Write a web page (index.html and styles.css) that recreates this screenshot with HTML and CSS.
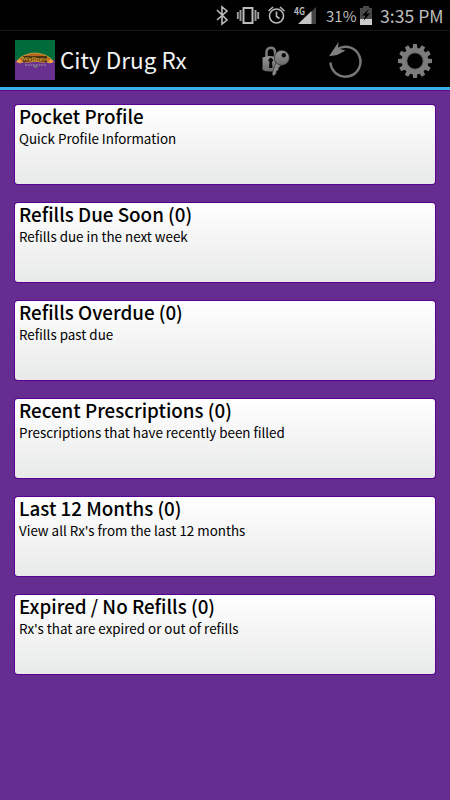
FILE: index.html
```
<!DOCTYPE html>
<html lang="en">
<head>
<meta charset="UTF-8">
<meta name="viewport" content="width=device-width, initial-scale=1.0">
<title>City Drug Rx</title>
<link rel="stylesheet" href="styles.css">
</head>
<body>
  <div class="status-bar">
    <svg class="status-icons" width="110" height="31" viewBox="0 0 110 31">
      <path d="M2 10L12 20L7 24V7L12 11L2 20" fill="none" stroke="#bbb" stroke-width="1.6"/>
      <rect x="28.5" y="8" width="9" height="15" fill="none" stroke="#bbb" stroke-width="2"/>
      <path d="M25.500 10V21M40.500 10V21M22.800 12V19M43.200 12V19" stroke="#999" stroke-width="2"/>
      <circle cx="61.5" cy="16" r="7" fill="none" stroke="#bbb" stroke-width="1.6"/>
      <path d="M61.5 11.5V16.5L64.5 18.5M53.5 11L58 7M69.500 11L65 7" fill="none" stroke="#bbb" stroke-width="1.6"/>
      <text x="79" y="15" class="network" textLength="11" lengthAdjust="spacingAndGlyphs">4G</text>
      <path d="M101 7V24H95V13Z" fill="#444"/>
      <path d="M96.500 11V24H83Z" fill="#c4c4c4"/>
    </svg>
    <span class="battery-level">31%</span>
    <svg class="battery" width="12" height="19" viewBox="0 0 12 19">
      <path d="M3 0H9V2H12V19H0V2H3Z" fill="#484848"/>
      <path d="M0 13H12V19H0Z" fill="#ccc"/>
      <path d="M9 3L2 9.500H5.500L3.500 15L10 7.500H6.500Z" fill="#000"/>
    </svg>
    <span class="clock">3:35 PM</span>
  </div>

  <div class="action-bar">
    <svg class="logo" width="40" height="40" viewBox="0 0 40 40">
      <rect width="40" height="20" fill="#006c3b"/>
      <rect y="20" width="40" height="20" fill="#68318f"/>
      <path d="M2 21Q7 14 20 13Q33 14 38 21L35 23Q20 16 5 23Z" fill="#b5651f" stroke="#e0a63c" stroke-width=".8"/>
      <path d="M1 22L5 19L7 22L4 23ZM39 22L35 19L33 22L36 23Z" fill="#f0a545"/>
      <path d="M8 16H32V22H8Z" fill="#4b3510"/>
      <text x="20" y="21" class="logo-text" textLength="26" lengthAdjust="spacingAndGlyphs">Wellness</text>
      <path d="M10 22.500Q20 20 30 22.500" fill="none" stroke="#d98b2b"/>
      <path d="M10 25H31" stroke="#a196a0" stroke-width="1" stroke-dasharray="2 .7"/>
      <path d="M18 26H23L20.500 28Z" fill="#77906e"/>
    </svg>
    <h1>City Drug Rx</h1>
    <div class="actions">
      <svg width="34" height="34" viewBox="0 0 34 34">
        <defs>
          <linearGradient id="metal" x1="0" y1="0" x2="0" y2="1">
            <stop offset="0" stop-color="#949494"/>
            <stop offset="1" stop-color="#6c6c6c"/>
          </linearGradient>
        </defs>
        <path d="M8.500 15V9.500Q8.500 4.800 12.800 4.800Q17 4.800 17 9.500V15" fill="none" stroke="#7c7c7c" stroke-width="2.500"/>
        <path d="M4.500 14.500Q12 11.500 19.500 14.500V27Q12 30 4.500 27Z" fill="url(#metal)"/>
        <path d="M11.500 19A2.200 2.200 0 1 1 14 19L14.500 25H11Z" fill="#080808"/>
        <path d="M18.500 18L24 21.500L20.500 25L20.500 27L18.500 28L18 31L15.500 33L14 31Z" fill="#8a8a8a" stroke="#222" stroke-width=".6"/>
        <circle cx="23.800" cy="14.800" r="7.500" fill="url(#metal)" stroke="#222" stroke-width=".7"/>
        <circle cx="25.800" cy="12.300" r="2.200" fill="#080808"/>
      </svg>
      <svg width="34" height="40" viewBox="0 0 34 40">
        <path d="M2.500 22.500A15 15 0 1 0 9.500 9" fill="none" stroke="#777" stroke-width="2.500"/>
        <path d="M1 16.300L10.500 2L10 8.500L17.500 10.500L9 15Z" fill="#808080"/>
      </svg>
      <svg class="settings" width="34" height="34" viewBox="-17 -17 34 34">
        <g fill="#7c7c7c">
          <path id="teeth" d="M-2.500 -12L-1.900 -17H1.900L2.500 -12V12L1.900 17H-1.900L-2.500 12Z"/>
          <use href="#teeth" transform="rotate(30)"/>
          <use href="#teeth" transform="rotate(60)"/>
          <use href="#teeth" transform="rotate(90)"/>
          <use href="#teeth" transform="rotate(120)"/>
          <use href="#teeth" transform="rotate(150)"/>
          <circle r="13.300"/>
        </g>
        <circle r="8.200" fill="#000" stroke="#666"/>
      </svg>
    </div>
  </div>

  <div class="menu">
    <div class="card">
      <h2>Pocket Profile</h2>
      <p>Quick Profile Information</p>
    </div>
    <div class="card">
      <h2>Refills Due Soon (0)</h2>
      <p>Refills due in the next week</p>
    </div>
    <div class="card">
      <h2>Refills Overdue (0)</h2>
      <p>Refills past due</p>
    </div>
    <div class="card">
      <h2>Recent Prescriptions (0)</h2>
      <p>Prescriptions that have recently been filled</p>
    </div>
    <div class="card">
      <h2>Last 12 Months (0)</h2>
      <p>View all Rx's from the last 12 months</p>
    </div>
    <div class="card">
      <h2>Expired / No Refills (0)</h2>
      <p>Rx's that are expired or out of refills</p>
    </div>
  </div>
</body>
</html>
```
FILE: styles.css
```
* {
  box-sizing: border-box;
}
body {
  margin: 0;
  height: 800px;
  overflow: hidden;
  background-color: #662d91;
  font-family: "Noto Sans CJK SC", "Noto Sans", sans-serif;
}
h1, h2, p {
  margin: 0;
  white-space: nowrap;
}
.status-bar {
  display: flex;
  align-items: center;
  height: 31px;
  padding-left: 215px;
  background-color: #000;
  border-bottom: 1px solid #161616;
  color: #bdbdbd;
}
.status-icons {
  flex: none;
}
.network {
  font-size: 10px;
  font-weight: bold;
  fill: #bbb;
}
.battery-level {
  width: 34px;
  margin-left: 1px;
  font-size: 15px;
}
.battery {
  flex: none;
}
.clock {
  margin-left: 8px;
  font-size: 17.6px;
  white-space: nowrap;
}
.action-bar {
  display: flex;
  align-items: center;
  height: 59px;
  padding: 0 18px 0 15px;
  background-color: #000;
  border-bottom: 3px solid #33b5e5;
  color: #f3f3f3;
}
.logo {
  margin-top: 1px;
}
.logo-text {
  font-family: "Liberation Serif", serif;
  font-size: 7px;
  font-weight: bold;
  text-anchor: middle;
  fill: #d59b32;
}
h1 {
  margin-left: 5px;
  font-size: 22.5px;
  font-weight: 400;
}
.actions {
  display: flex;
  align-items: center;
  gap: 36px;
  margin-left: auto;
  margin-top: 2px;
}
.settings {
  margin-top: 2px;
}
.menu {
  display: flex;
  flex-direction: column;
  gap: 19px;
  padding: 14px 15px 0;
  border-top: 1px solid #71008f;
}
.card {
  height: 79px;
  padding-left: 4px;
  border-radius: 3px;
  background: linear-gradient(#fff, #e8e9e9);
  box-shadow: 0 0 0 1px #5b0092;
  color: #000;
}
.card h2 {
  font-size: 18.8px;
  font-weight: 500;
  line-height: 22px;
}
.card p {
  font-size: 13.4px;
  line-height: 23px;
}
```
